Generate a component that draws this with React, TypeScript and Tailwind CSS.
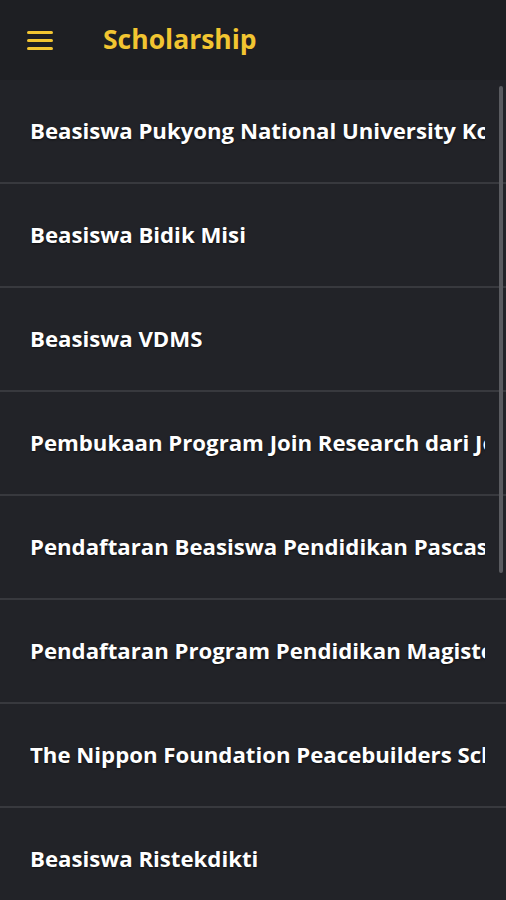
import React from "react";

const items = [
  "Beasiswa Pukyong National University Korea",
  "Beasiswa Bidik Misi",
  "Beasiswa VDMS",
  "Pembukaan Program Join Research dari Jepang",
  "Pendaftaran Beasiswa Pendidikan Pascasarjana",
  "Pendaftaran Program Pendidikan Magister",
  "The Nippon Foundation Peacebuilders Scholarship",
  "Beasiswa Ristekdikti",
];

export default function App() {
  return (
    <div
      className="w-[506px] h-[900px] bg-[#222328] overflow-hidden flex flex-col"
      style={{ fontFamily: "'Open Sans', Lato, sans-serif" }}
    >
      <header className="h-[80px] shrink-0 bg-[#1e1f23] flex items-center">
        <div className="ml-[27px] w-[26px] flex flex-col gap-[5px]">
          <div className="h-[3px] bg-[#f2c531] rounded-sm" />
          <div className="h-[3px] bg-[#f2c531] rounded-sm" />
          <div className="h-[3px] bg-[#f2c531] rounded-sm" />
        </div>
        <h1 className="ml-[50px] text-[26.5px] font-bold text-[#f2c531]">
          Scholarship
        </h1>
      </header>
      <div className="relative flex-1 overflow-hidden">
        <div className="absolute right-[3px] top-[6px] w-[4px] h-[487px] bg-[#5a5b60] rounded-full" />
        {items.map((t, i) => (
          <div key={i} className="h-[104px] shrink-0 flex flex-col">
            <div className="flex-1 flex items-center pl-[30px] pr-[21px] overflow-hidden">
              <span className="whitespace-nowrap overflow-hidden text-clip text-[22.2px] font-bold text-white [text-shadow:0_1px_2px_rgba(0,0,0,0.6)]">
                {t}
              </span>
            </div>
            <div className="h-[2px] bg-[#38393e]" />
          </div>
        ))}
      </div>
    </div>
  );
}
